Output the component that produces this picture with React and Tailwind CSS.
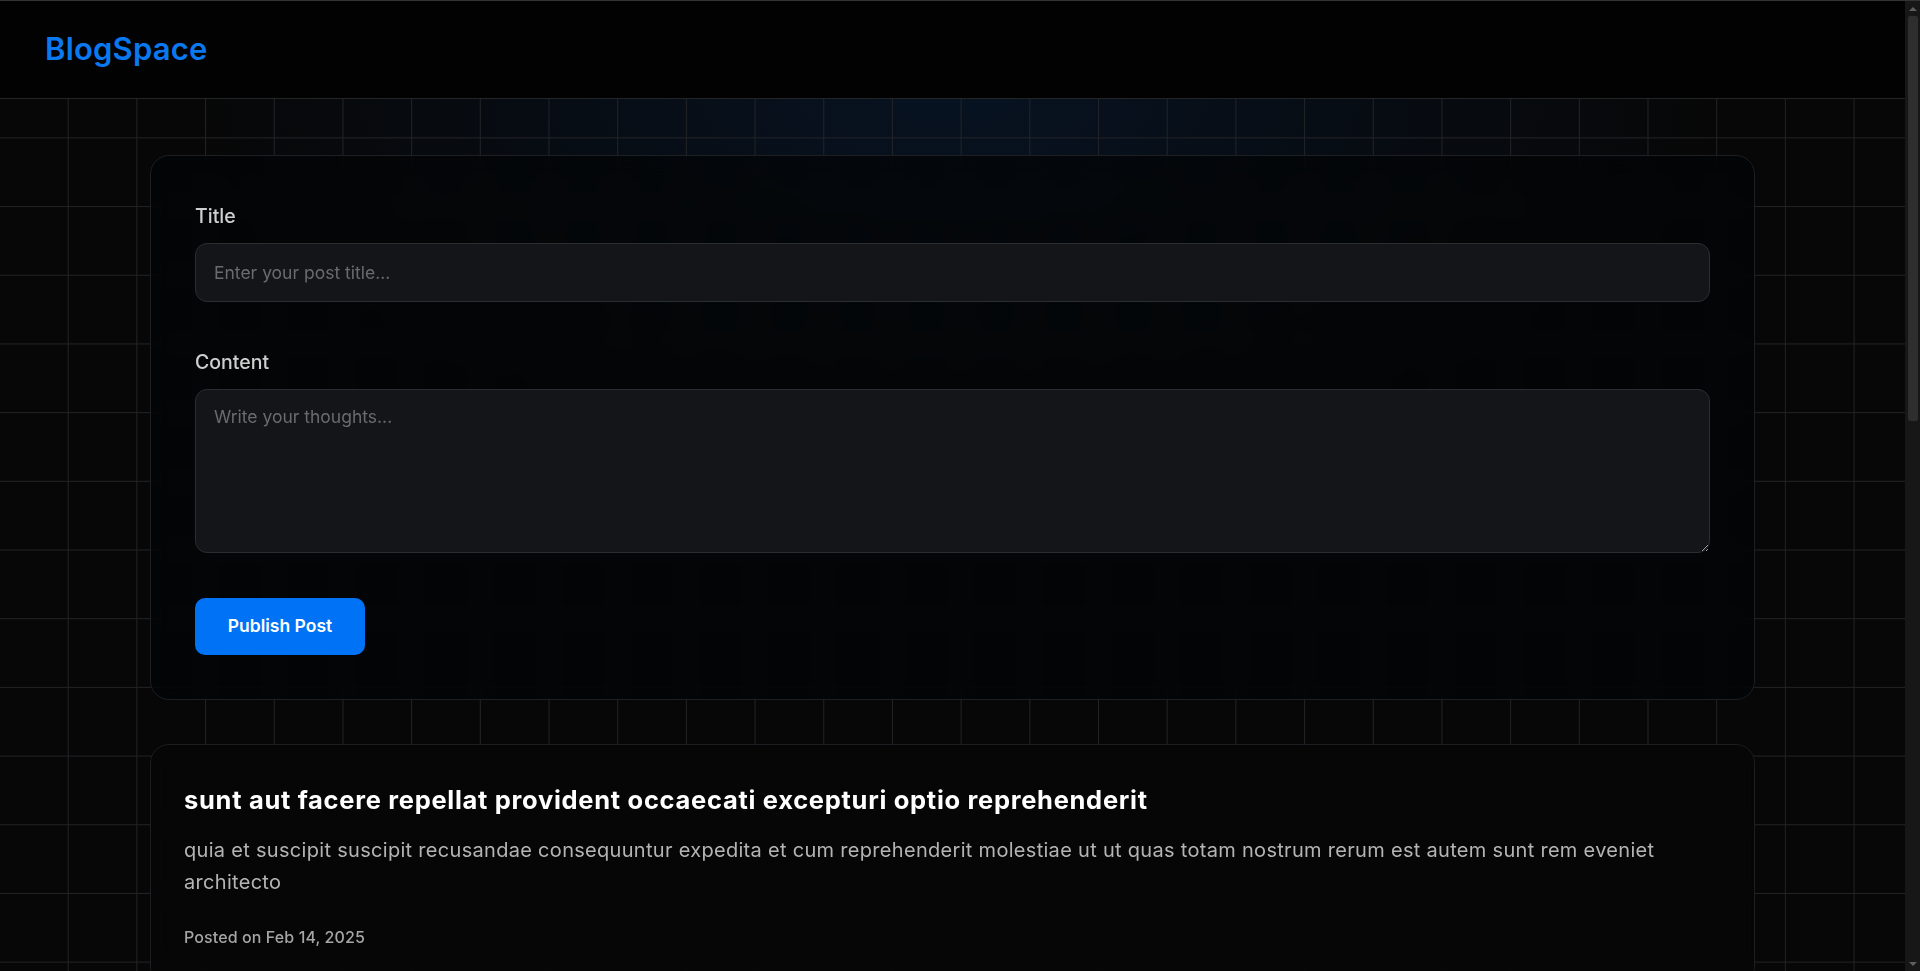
const posts = [
	{
		id: 1,
		title: 'sunt aut facere repellat provident occaecati excepturi optio reprehenderit',
		body: 'quia et suscipit suscipit recusandae consequuntur expedita et cum reprehenderit molestiae ut ut quas totam nostrum rerum est autem sunt rem eveniet architecto',
	},
	{
		id: 2,
		title: 'qui est esse',
		body: 'est rerum tempore vitae sequi sint nihil reprehenderit dolor beatae ea dolores neque fugiat blanditiis voluptate porro vel nihil molestiae ut reiciendis qui aperiam non debitis possimus qui neque nisi nulla',
	},
	{
		id: 3,
		title: 'ea molestias quasi exercitationem repellat qui ipsa sit aut',
		body: 'et iusto sed quo iure voluptatem occaecati omnis eligendi aut ad voluptatem doloribus vel accusantium quis pariatur molestiae porro eius odio et labore et velit aut',
	},
	{
		id: 4,
		title: 'eum et est occaecati',
		body: 'ullam et saepe reiciendis voluptatem adipisci sit amet autem assumenda provident rerum culpa quis hic commodi nesciunt rem tenetur doloremque ipsam iure quis sunt voluptatem rerum illo velit',
	},
	{
		id: 5,
		title: 'nesciunt quas odio',
		body: 'repudiandae veniam quaerat sunt sed alias aut fugiat sit autem sed est voluptatem omnis possimus esse voluptatibus quis est aut tenetur dolor neque',
	},
];

function PostCard({ post }) {
	return (
		<article className="border border-[#1c1e21] rounded-[19px] bg-[rgba(6,6,7,0.85)] backdrop-blur-md px-[33px] pt-[37px] pb-[36px]">
			<h2 className="text-[25.5px] leading-[36px] font-bold tracking-[0.7px] text-white">{post.title}</h2>
			<p className="mt-[16px] max-w-[1520px] text-[20px] leading-[32.3px] tracking-[0.3px] text-[#b4b4b4]">{post.body}</p>
			<div className="mt-[26px] text-[16px] leading-[24px] font-medium tracking-[0.1px] text-[#a6a6a6]">Posted on Feb 14, 2025</div>
		</article>
	);
}

// the screenshot shows the browser's dark scrollbar, drawn here as a strip
function ScrollStrip() {
	return (
		<div className="w-[15px] shrink-0 bg-[#171717] flex flex-col items-center">
			<div className="h-[15px] w-full flex items-center justify-center">
				<div className="w-0 h-0 border-x-[4px] border-x-transparent border-b-[4px] border-b-[#5e5e5e]" />
			</div>
			<div className="w-[10px] h-[405px] rounded-[2px] bg-[#2e2e2e]" />
			<div className="flex-1" />
			<div className="h-[15px] w-full flex items-center justify-center">
				<div className="w-0 h-0 border-x-[4px] border-x-transparent border-t-[4px] border-t-[#5e5e5e]" />
			</div>
		</div>
	);
}

export default function App() {
	return (
		<div className="h-screen flex overflow-hidden border-t border-t-[#333333] bg-[#070707] font-['Inter',sans-serif]">
			<div className="flex-1 min-w-0 overflow-y-auto [scrollbar-width:none]">
				<div className="min-h-full pb-[60px] bg-[image:linear-gradient(to_right,#222326_1px,transparent_1px),linear-gradient(to_bottom,#222326_1px,transparent_1px),radial-gradient(ellipse_1100px_520px_at_50%_90px,rgba(8,45,95,0.30),transparent_70%)] bg-[size:68.7px_68.7px,68.7px_68.7px,100%_100%] bg-[position:-1px_-1px,0px_-1px,0px_0px]">
					<header className="h-[98px] flex items-center px-[45px] bg-[#020203] border-b border-b-[#242527]">
						<div className="text-[31px] font-semibold tracking-[0.2px] text-[#0a78ef]">BlogSpace</div>
					</header>

					<main className="mx-[150px] pt-[56px] flex flex-col gap-[44px]">
						<section className="border border-[#1d1f23] rounded-[19px] bg-[rgba(3,4,6,0.72)] backdrop-blur-md px-[44px] pt-[46px] pb-[44px]">
							<div className="mb-[46px]">
								<label className="block text-[19.5px] leading-[28px] font-medium text-[#cfcfcf] mb-[13px]">Title</label>
								<input
									type="text"
									placeholder="Enter your post title..."
									className="w-full h-[59px] rounded-[12px] border border-[#2a2d31] bg-[#131518] px-[18px] text-[17.5px] text-white placeholder:text-[#686b70] outline-none"
								/>
							</div>
							<div className="mb-[45px]">
								<label className="block text-[19.5px] leading-[28px] font-medium text-[#cfcfcf] mb-[13px]">Content</label>
								<textarea
									placeholder="Write your thoughts..."
									className="block w-full h-[164px] rounded-[12px] border border-[#2a2d31] bg-[#131518] px-[18px] py-[13px] text-[17.5px] leading-[28px] text-white placeholder:text-[#686b70] outline-none"
								/>
							</div>
							<button className="w-[170px] h-[57px] rounded-[10px] bg-[#0072f5] text-white text-[17.5px] font-semibold">Publish Post</button>
						</section>

						{posts.map((post) => (
							<PostCard key={post.id} post={post} />
						))}
					</main>
				</div>
			</div>
			<ScrollStrip />
		</div>
	);
}
